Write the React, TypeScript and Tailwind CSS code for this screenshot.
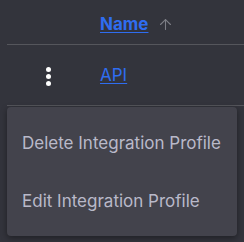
import { ArrowUp } from 'lucide-react';

const App = () => {
  return (
    <div
      className="relative w-[244px] h-[242px] overflow-hidden bg-[#33343c]"
      style={{ fontFamily: 'Inter, "Noto Sans", sans-serif' }}
    >
      <div className="ml-[7px]">
        {/* Header */}
        <div className="flex items-center h-[45px] pt-[5px] border-b border-[#55565c]">
          <div className="w-[93px]" />
          <span className="text-[17px] font-bold text-[#2f6df0] underline underline-offset-2">Name</span>
          <ArrowUp className="ml-[9px] w-[17px] h-[17px] text-[#7d7e86]" strokeWidth={1.5} />
        </div>

        {/* Row */}
        <div className="flex items-center h-[61px] pt-[2px] border-b border-[#55565c]">
          <div className="w-[93px] flex justify-center pr-[8px]">
            <div className="flex flex-col gap-[2px] ml-[-2px]">
              <span className="w-[5px] h-[5px] rounded-full bg-white" />
              <span className="w-[5px] h-[5px] rounded-full bg-white" />
              <span className="w-[5px] h-[5px] rounded-full bg-white" />
            </div>
          </div>
          <span className="text-[17px] text-[#2f6df0] underline underline-offset-2">API</span>
        </div>
      </div>

      {/* Dropdown menu */}
      <div className="absolute left-[7px] top-[107px] w-[230px] h-[129px] rounded-[4px] bg-[#43434c] shadow-[0_2px_6px_rgba(0,0,0,0.4)] flex flex-col pt-[7px] pb-[5px]">
        <div className="flex-1 flex items-center px-[15px] text-[17px] text-[#b9b9c9]">Delete Integration Profile</div>
        <div className="flex-1 flex items-center px-[15px] text-[17px] text-[#b9b9c9]">Edit Integration Profile</div>
      </div>
    </div>
  );
};

export default App;
